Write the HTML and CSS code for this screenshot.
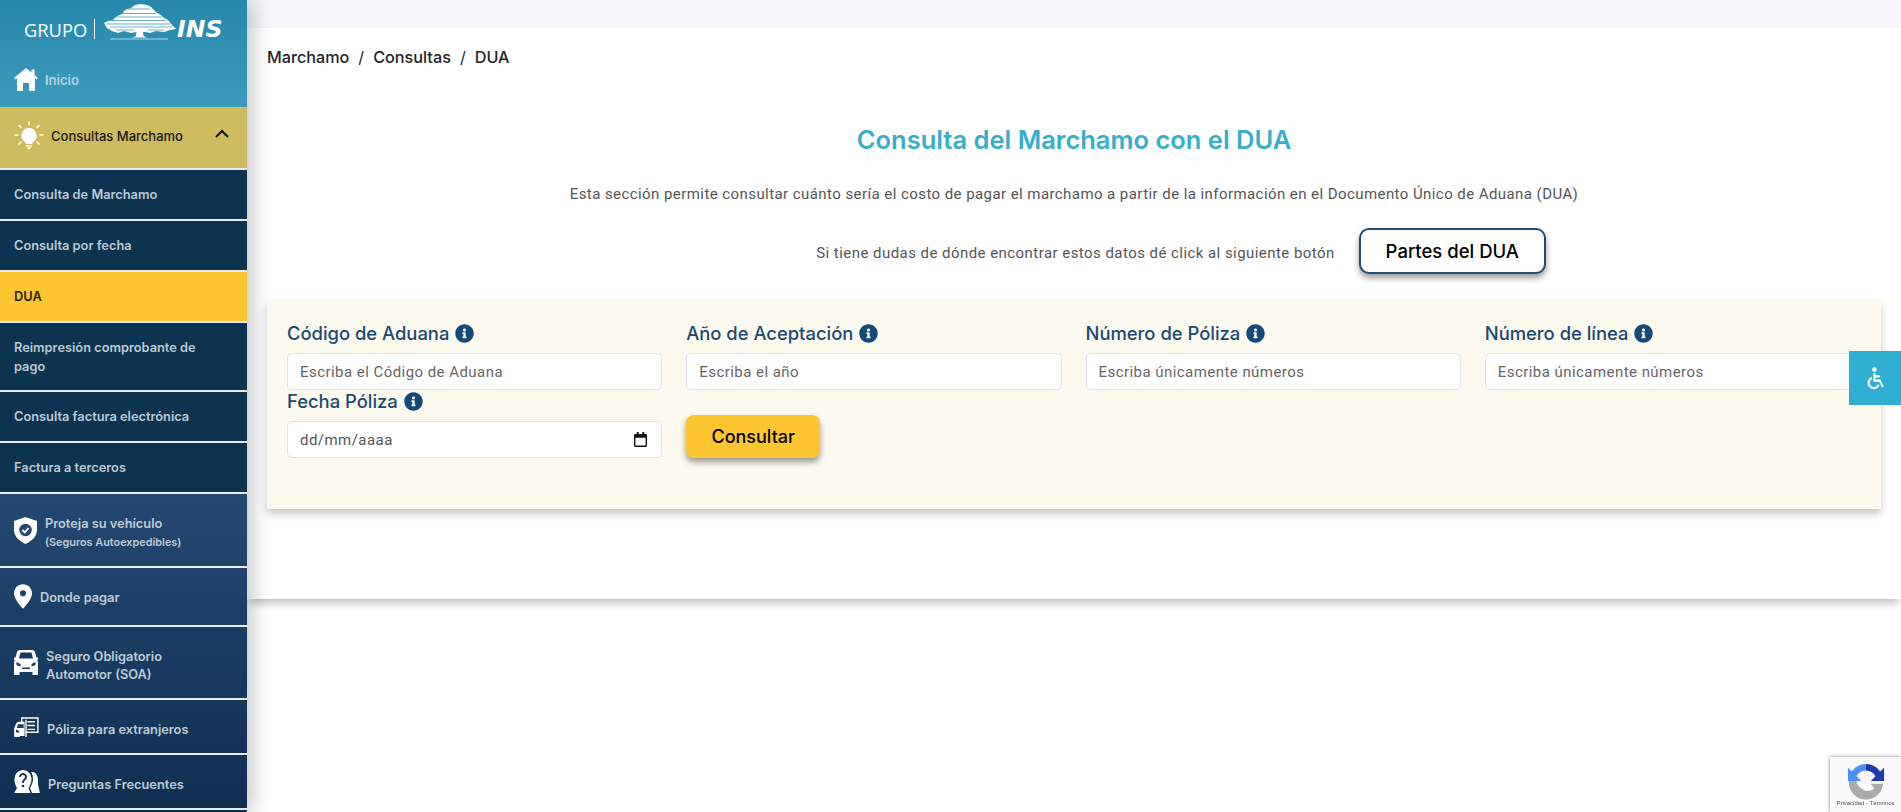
FILE: index.html
```html
<!DOCTYPE html>
<html lang="es">
<head>
    <meta charset="UTF-8">
    <title>Consulta del Marchamo con el DUA</title>
    <link rel="stylesheet" href="styles.css">
</head>
<body>
    <div class="layout">
        <aside class="sidebar">
            <div class="sidebar-top">
                <div class="logo">
                    <span class="logo-grupo">GRUPO</span>
                    <span class="logo-bar"></span>
                    <svg class="logo-tree" viewBox="0 0 72 36">
                        <path fill="#fff" d="M0 19L4 17 9 16 13 12 18 10 21 6 27 4 31 1 37 0 43 1 47 3 50 6 53 9 57 11 60 14 64 16 68 21 72 25 66 26 60 28 52 27 46 29 41 28 39 28 39.500 32 43 33.500 28 33.500 32 32 32.500 28 27 29 20 27 14 29 8 27 3 24z"/>
                        <path stroke="#2b8fb2" stroke-width="0.7" d="M24 5H46M16 9.500H52M10 13H58M5 16.500H62M2 20H66M6 23H68M12 26H30M44 26H60"/>
                        <path stroke="#fff" stroke-width="0.6" d="M6 35H64"/>
                    </svg>
                    <span class="logo-ins">INS</span>
                </div>
                <a class="nav-link home-link">
                    <svg class="icon-home" viewBox="0 0 24 23"><path fill="#fff" d="M12 0l5.500 4.500V1.500h3v5.500L24 10l-1.300 1.600L21 10.300V23h-6v-8H9v8H3V10.300l-1.700 1.300L0 10z"/></svg>
                    <span>Inicio</span>
                </a>
            </div>

            <a class="nav-link group-open">
                <svg class="icon-bulb" viewBox="0 0 30 30">
                    <path fill="#fff" d="M15 7a7.500 7.500 0 0 0-4.500 13.500c1 .8 1.300 1.500 1.300 2.500h6.400c0-1 .3-1.700 1.300-2.500A7.500 7.500 0 0 0 15 7zM12 24h6v1.500h-6zM12.800 26.300h4.400L15 29z"/>
                    <path stroke="#fff" stroke-width="1.500" stroke-linecap="round" d="M15 1v3M5 4.500l2 2M25 4.500l-2 2M1 14h3M26 14h3M5 23l2-2M25 23l-2-2"/>
                </svg>
                <span>Consultas Marchamo</span>
                <svg class="icon-chevron" viewBox="0 0 14 9"><path fill="none" stroke="#111" stroke-width="2" d="M1 8l6-6 6 6"/></svg>
            </a>

            <a class="sub-link">Consulta de Marchamo</a>
            <a class="sub-link">Consulta por fecha</a>
            <a class="sub-link sub-active">DUA</a>
            <a class="sub-link sub-double">Reimpresión comprobante de pago</a>
            <a class="sub-link">Consulta factura electrónica</a>
            <a class="sub-link">Factura a terceros</a>

            <div class="nav-lower">
                <a class="lower-link proteja">
                    <svg class="icon-shield" viewBox="0 0 24 28">
                        <path fill="#fff" d="M12 0l12 4v9c0 7-5 12-12 15C5 25 0 20 0 13V4z"/>
                        <circle cx="12" cy="13.500" r="6.500" fill="#234872"/>
                        <path fill="none" stroke="#fff" stroke-width="2" d="M8.800 13.500l2.400 2.400 4-4.400"/>
                    </svg>
                    <span class="lower-text">Proteja su vehículo<small>(Seguros Autoexpedibles)</small></span>
                </a>
                <a class="lower-link donde">
                    <svg class="icon-pin" viewBox="0 0 19 26">
                        <path fill="#fff" fill-rule="evenodd" d="M9.500 0C4.200 0 0 4.200 0 9.500 0 15 5.500 21.500 9.500 26c4-4.500 9.500-11 9.500-16.500C19 4.200 14.800 0 9.500 0zm0 6.500a3.200 3.200 0 1 1 0 6.400 3.200 3.200 0 0 1 0-6.400z"/>
                    </svg>
                    <span class="lower-text">Donde pagar</span>
                </a>
                <a class="lower-link seguro">
                    <svg class="icon-car" viewBox="0 0 24 25">
                        <path fill="#fff" fill-rule="evenodd" d="M6 0h12c1.500 0 2.500.8 3 2l1.500 5.500H24V10h-1c.7.8 1 1.600 1 2.500V25h-5.500v-3h-13v3H0V12.500c0-.9.300-1.700 1-2.500H0V7.500h1.500L3 2C3.500.8 4.500 0 6 0zm.5 2.500L5 8.500h14l-1.500-6zM2.500 12v3l4 1.500v-2.500zm19 0l-4 2v2.500l4-1.500zM8 17.500v1.500h8v-1.500z"/>
                    </svg>
                    <span class="lower-text">Seguro Obligatorio<br>Automotor (SOA)</span>
                </a>
                <a class="lower-link poliza">
                    <svg class="icon-poliza" viewBox="0 0 26 21">
                        <path fill="none" stroke="#fff" stroke-width="1.500" d="M8 6V1h17v15H12"/>
                        <path stroke="#fff" stroke-width="1.500" d="M14 5h8M14 9h8M14 13h8M12.500 3v18"/>
                        <path fill="#fff" d="M0 21V12l2-5c.5-1 1.500-2 3-2h6v15H6v1z"/>
                        <path fill="#1a3a60" d="M2 13l3 1.500v2L2 16zM4 7.500h6v4H3z"/>
                    </svg>
                    <span class="lower-text">Póliza para extranjeros</span>
                </a>
                <a class="lower-link preguntas">
                    <svg class="icon-help" viewBox="0 0 26 23">
                        <path fill="#fff" d="M9 0a8.500 8.500 0 0 1 8.500 9c0 4.500-2 7-3 9l2 5H0l3-5C1.500 16 .5 13 .5 9A8.500 8.500 0 0 1 9 0z"/>
                        <path fill="#fff" d="M19 2c4 1 5 5 5 9 0 3 .5 6 2 12h-8l-2-5c1.500-2.500 3-5 3-9 0-2.500-.500-5-2-7z"/>
                        <path fill="none" stroke="#16365b" stroke-width="2" d="M6 7a3 3 0 1 1 4.500 2.600C9.300 10.300 9 11 9 13"/>
                        <circle cx="9" cy="16" r="1.300" fill="#16365b"/>
                    </svg>
                    <span class="lower-text">Preguntas Frecuentes</span>
                </a>
            </div>
        </aside>

        <main class="main">
            <div class="top-strip"></div>
            <section class="content">
                <nav class="breadcrumb">
                    <span>Marchamo</span><span class="sep">/</span><span>Consultas</span><span class="sep">/</span><span>DUA</span>
                </nav>
                <h1 class="title">Consulta del Marchamo con el DUA</h1>
                <p class="intro">Esta sección permite consultar cuánto sería el costo de pagar el marchamo a partir de la información en el Documento Único de Aduana (DUA)</p>
                <div class="help-row">
                    <span class="help-text">Si tiene dudas de dónde encontrar estos datos dé click al siguiente botón</span>
                    <button class="btn-outline" type="button">Partes del DUA</button>
                </div>

                <form class="form-card">
                    <div class="field">
                        <label>Código de Aduana <svg class="icon-info" viewBox="0 0 512 512"><use href="#info"/></svg></label>
                        <input type="text" placeholder="Escriba el Código de Aduana">
                    </div>
                    <div class="field">
                        <label>Año de Aceptación <svg class="icon-info" viewBox="0 0 512 512"><use href="#info"/></svg></label>
                        <input type="text" placeholder="Escriba el año">
                    </div>
                    <div class="field">
                        <label>Número de Póliza <svg class="icon-info" viewBox="0 0 512 512"><use href="#info"/></svg></label>
                        <input type="text" placeholder="Escriba únicamente números">
                    </div>
                    <div class="field">
                        <label>Número de línea <svg class="icon-info" viewBox="0 0 512 512"><use href="#info"/></svg></label>
                        <input type="text" placeholder="Escriba únicamente números">
                    </div>
                    <div class="field">
                        <label>Fecha Póliza <svg class="icon-info" viewBox="0 0 512 512"><use href="#info"/></svg></label>
                        <div class="date-input">
                            <span>dd/mm/aaaa</span>
                            <svg class="icon-calendar" viewBox="0 0 14 16"><path fill="#111" fill-rule="evenodd" d="M3 0h2v2h4V0h2v2h1.500C13.300 2 14 2.700 14 3.500v11c0 .8-.7 1.500-1.500 1.500h-11C.7 16 0 15.300 0 14.500v-11C0 2.700.7 2 1.500 2H3zM1.500 6v8.500h11V6z"/></svg>
                        </div>
                    </div>
                    <div class="field">
                        <button class="btn-yellow" type="button">Consultar</button>
                    </div>
                </form>
            </section>
        </main>
    </div>

    <a class="access-btn">
        <svg viewBox="0 0 20 22">
            <circle cx="9" cy="2.500" r="2.200" fill="#fff"/>
            <path fill="none" stroke="#fff" stroke-width="2" d="M9 6v7h5l3 6M9 9h5"/>
            <path fill="none" stroke="#fff" stroke-width="2" d="M6.500 10.500a5 5 0 1 0 6.500 6.500"/>
        </svg>
    </a>

    <div class="recaptcha">
        <svg viewBox="0 0 40 40">
            <path fill="#4a90f5" d="M20 2A18 18 0 0 0 5 10L1 6v14h14l-5-5a12 12 0 0 1 10-6z"/>
            <path fill="#1c3aa9" d="M20 2a18 18 0 0 1 15 8l4-4v14H25l5-5a12 12 0 0 0-10-6z"/>
            <path fill="#ababab" d="M2 20h8a12 12 0 0 0 19 8l-4-5h13a18 18 0 0 1-36-3z"/>
        </svg>
        <span>Privacidad - Términos</span>
    </div>

    <svg class="defs"><symbol id="info" viewBox="0 0 512 512"><path fill="#15497a" d="M256 8C119.043 8 8 119.083 8 256c0 136.997 111.043 248 248 248s248-111.003 248-248C504 119.083 392.957 8 256 8zm0 110c23.196 0 42 18.804 42 42s-18.804 42-42 42-42-18.804-42-42 18.804-42 42-42zm56 254c0 6.627-5.373 12-12 12h-88c-6.627 0-12-5.373-12-12v-24c0-6.627 5.373-12 12-12h12v-64h-12c-6.627 0-12-5.373-12-12v-24c0-6.627 5.373-12 12-12h64c6.627 0 12 5.373 12 12v100h12c6.627 0 12 5.373 12 12v24z"/></symbol></svg>
</body>
</html>
```

FILE: styles.css
```css
* {
    box-sizing: border-box;
}
html, body {
    height: 100%;
}
body {
    margin: 0;
    font-family: Inter, "Liberation Sans", sans-serif;
    background-color: white;
    overflow: hidden;
}
.defs {
    display: none;
}
.layout {
    display: flex;
    height: 812px;
}

/* sidebar */
.sidebar {
    width: 247px;
    flex-shrink: 0;
    height: 812px;
    overflow: hidden;
    background-color: #0f2f50;
    box-shadow: 6px 0 18px rgba(0,0,0,0.22);
    position: relative;
    z-index: 2;
}
.sidebar a {
    display: flex;
    align-items: center;
    border-bottom: 2px solid #e8eef2;
}
.sidebar-top {
    height: 107px;
    background: linear-gradient(#2788ad, #3a9bbd);
}
.logo {
    display: flex;
    align-items: flex-start;
    height: 58px;
    padding: 4px 0 0 24px;
    color: white;
}
.logo-grupo {
    font-family: "Open Sans", sans-serif;
    font-size: 18.300px;
    margin-top: 13px;
    width: 63px;
}
.logo-bar {
    width: 1px;
    height: 20px;
    background-color: white;
    margin: 15px 0 0 7px;
}
.logo-tree {
    width: 72px;
    height: 36px;
    margin-left: 9px;
}
.logo-ins {
    font-family: "DejaVu Sans", sans-serif;
    font-weight: bold;
    font-style: italic;
    font-size: 23.500px;
    line-height: 23px;
    margin: 14px 0 0 1px;
}
.nav-link {
    font-size: 13px;
}
.sidebar .home-link {
    border-bottom: none;
    height: 47px;
    padding: 0 0 4px 14px;
    color: #b6d3e0;
    font-weight: 600;
}
.icon-home {
    width: 24px;
    height: 23px;
    margin-right: 7px;
}
.group-open {
    height: 63px;
    padding: 0 18px 4px 14px;
    background-color: #cdbc5f;
    color: #16181a;
    font-weight: 500;
}
.icon-bulb {
    width: 30px;
    height: 30px;
    margin-right: 7px;
}
.icon-chevron {
    width: 14px;
    height: 9px;
    margin-left: auto;
    margin-bottom: 4px;
}
.sub-link {
    height: 51px;
    padding: 0 14px;
    background-color: #0c3350;
    color: #bcc9d4;
    font-size: 12.800px;
    font-weight: 600;
    line-height: 19px;
}
.sub-active {
    background-color: #fdc631;
    color: #2b1c00;
}
.sub-double {
    height: 69px;
    padding-right: 40px;
}
.nav-lower {
    background: linear-gradient(#234872, #0f2f50);
    height: 318px;
}
.lower-link {
    color: #bfcbd8;
    font-size: 12.800px;
    font-weight: 600;
    line-height: 18px;
    padding-left: 14px;
}
.lower-text {
    padding-top: 6px;
}
.donde .lower-text {
    padding-top: 3px;
}
.lower-text small {
    display: block;
    font-size: 10.850px;
    line-height: 19px;
}
.proteja {
    height: 74px;
}
.donde {
    height: 59px;
}
.seguro {
    height: 73px;
}
.poliza, .preguntas {
    height: 55px;
}
.icon-shield {
    width: 23px;
    height: 27px;
    margin-right: 8px;
}
.icon-pin {
    width: 18px;
    height: 25px;
    margin-right: 8px;
}
.icon-car {
    width: 24px;
    height: 25px;
    margin-right: 8px;
}
.icon-poliza {
    width: 25px;
    height: 20px;
    margin-right: 8px;
}
.icon-help {
    width: 26px;
    height: 23px;
    margin-right: 8px;
}

/* main */
.main {
    flex: 1;
    min-width: 0;
}
.top-strip {
    height: 28px;
    background-color: #f4f7fa;
}
.content {
    height: 571px;
    padding: 20px 20px 0;
    background-color: white;
    box-shadow: 0 6px 8px -2px rgba(0,0,0,0.25);
}
.breadcrumb {
    display: flex;
    font-size: 16.200px;
    font-weight: 500;
    line-height: 19px;
    color: #212529;
}
.sep {
    margin: 0 9px;
    font-weight: 400;
}
.title {
    margin: 54px 0 0;
    text-align: center;
    font-size: 25.500px;
    font-weight: 600;
    line-height: 38px;
    color: #37aecb;
}
.intro {
    margin: 25px 0 0;
    text-align: center;
    font-family: Roboto, sans-serif;
    font-size: 15px;
    letter-spacing: 0.43px;
    line-height: 20px;
    color: #555;
}
.help-row {
    display: flex;
    justify-content: center;
    align-items: center;
    gap: 24px;
    margin-top: 24px;
    padding-left: 214px;
    font-family: Roboto, sans-serif;
    font-size: 15px;
    letter-spacing: 0.45px;
    color: #555;
}
.help-text {
    padding-top: 4px;
}
.btn-outline {
    width: 187px;
    height: 46px;
    background-color: white;
    border: 2px solid #1f4e72;
    border-radius: 10px;
    box-shadow: 0 4px 6px rgba(0,0,0,0.4);
    font-family: Inter, sans-serif;
    font-size: 18.500px;
    font-weight: 500;
    color: black;
}
.form-card {
    display: grid;
    grid-template-columns: repeat(4, 1fr);
    column-gap: 24px;
    height: 209px;
    margin-top: 26px;
    padding: 22px 21px 0 20px;
    align-content: start;
    background-color: #fcf9ee;
    box-shadow: 0 5px 8px rgba(0,0,0,0.22);
}
.field label {
    display: flex;
    align-items: center;
    gap: 6px;
    height: 22px;
    margin-bottom: 9px;
    font-size: 18.400px;
    font-weight: 500;
    color: #1a4a73;
}
.icon-info {
    width: 19px;
    height: 19px;
}
.field input, .date-input {
    width: 100%;
    height: 37px;
    padding: 0 12px;
    background-color: white;
    border: 1px solid #dfe2e6;
    border-radius: 5px;
    font-family: Roboto, sans-serif;
    font-size: 15px;
    letter-spacing: 0.45px;
    color: #555;
}
.field input::placeholder {
    color: #666;
    opacity: 1;
}
.date-input {
    display: flex;
    align-items: center;
    justify-content: space-between;
}
.icon-calendar {
    width: 13px;
    height: 15px;
    margin-right: 2px;
}
.btn-yellow {
    width: 134px;
    height: 43px;
    margin-top: 25px;
    background-color: #fdc631;
    border: none;
    border-radius: 8px;
    box-shadow: 0 4px 6px rgba(0,0,0,0.4);
    font-family: Inter, sans-serif;
    font-size: 18px;
    font-weight: 500;
    color: black;
}

/* floating stuff */
.access-btn {
    position: fixed;
    right: 0;
    top: 351px;
    width: 52px;
    height: 54px;
    background-color: #2fb0d2;
    display: flex;
    align-items: center;
    justify-content: center;
}
.access-btn svg {
    width: 21px;
    height: 23px;
}
.recaptcha {
    position: fixed;
    right: 0;
    bottom: 0;
    width: 71px;
    height: 55px;
    background-color: #f9f9f9;
    box-shadow: 0 0 4px rgba(0,0,0,0.45);
    display: flex;
    flex-direction: column;
    align-items: center;
    padding-top: 5px;
}
.recaptcha svg {
    width: 38px;
    height: 38px;
}
.recaptcha span {
    font-family: "Liberation Sans", sans-serif;
    font-size: 6px;
    color: #555;
    white-space: nowrap;
}
```
